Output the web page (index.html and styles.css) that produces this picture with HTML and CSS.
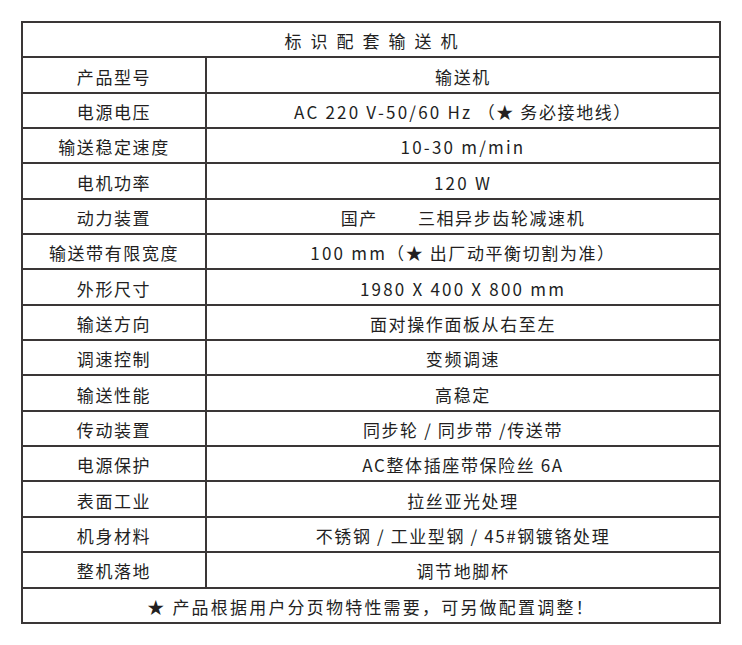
FILE: index.html
```html
<!DOCTYPE html>
<html lang="zh-CN">
<head>
<meta charset="utf-8">
<title>标识配套输送机</title>
<link rel="stylesheet" href="styles.css">
</head>
<body>
<div class="spec">
  <div class="cell title">标识配套输送机</div>
  <div class="cell key">产品型号</div><div class="cell val">输送机</div>
  <div class="cell key">电源电压</div><div class="cell val"><span class="lat">AC 220 V-50/60 Hz</span> （★ 务必接地线）</div>
  <div class="cell key">输送稳定速度</div><div class="cell val"><span class="lat">10-30 m/min</span></div>
  <div class="cell key">电机功率</div><div class="cell val"><span class="lat">120 W</span></div>
  <div class="cell key">动力装置</div><div class="cell val">国产<span class="gap"></span>三相异步齿轮减速机</div>
  <div class="cell key">输送带有限宽度</div><div class="cell val"><span class="lat">100 mm</span>（★ 出厂动平衡切割为准）</div>
  <div class="cell key">外形尺寸</div><div class="cell val"><span class="lat">1980 X 400 X 800 mm</span></div>
  <div class="cell key">输送方向</div><div class="cell val">面对操作面板从右至左</div>
  <div class="cell key">调速控制</div><div class="cell val">变频调速</div>
  <div class="cell key">输送性能</div><div class="cell val">高稳定</div>
  <div class="cell key">传动装置</div><div class="cell val">同步轮 / 同步带 /传送带</div>
  <div class="cell key">电源保护</div><div class="cell val">AC整体插座带保险丝 6A</div>
  <div class="cell key">表面工业</div><div class="cell val">拉丝亚光处理</div>
  <div class="cell key">机身材料</div><div class="cell val">不锈钢 / 工业型钢 / 45#钢镀铬处理</div>
  <div class="cell key">整机落地</div><div class="cell val">调节地脚杯</div>
  <div class="cell note">★ 产品根据用户分页物特性需要，可另做配置调整！</div>
</div>
</body>
</html>
```
FILE: styles.css
```css
html, body {
  margin: 0;
  padding: 0;
  background: #ffffff;
}
body {
  font-family: "Noto Sans CJK SC", "Noto Sans", sans-serif;
  color: #231f1f;
}
.spec {
  margin: 21px 0 0 21px;
  width: 700px;
  box-sizing: border-box;
  display: grid;
  grid-template-columns: 184px 1fr;
  grid-template-rows: repeat(17, 35.35px);
  border-top: 2px solid #3a3636;
  border-left: 2px solid #3a3636;
}
.cell {
  border-right: 2px solid #3a3636;
  border-bottom: 2px solid #3a3636;
  display: flex;
  align-items: center;
  justify-content: center;
  font-size: 17px;
  letter-spacing: 1.6px;
  white-space: pre;
  padding-top: 2px;
}
.lat {
  letter-spacing: 2.2px;
}
.title {
  grid-column: 1 / 3;
  letter-spacing: 9px;
  font-size: 17px;
  padding-left: 9px;
}
.note {
  grid-column: 1 / 3;
  letter-spacing: 2.2px;
}
.gap {
  display: inline-block;
  width: 40px;
}
```
